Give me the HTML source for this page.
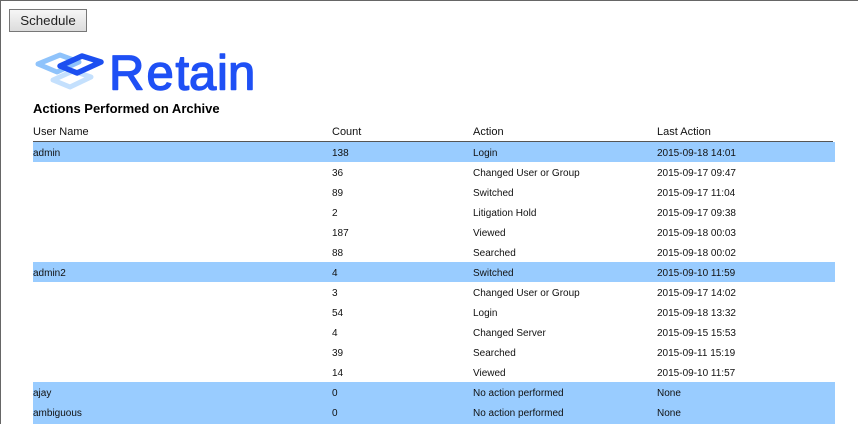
<!DOCTYPE html>
<html>
<head>
<meta charset="utf-8">
<style>
html,body{margin:0;padding:0;background:#fff;}
body{width:858px;height:424px;overflow:hidden;position:relative;font-family:"Liberation Sans",Arial,sans-serif;color:#111;}
#t{position:absolute;left:0;top:0;width:858px;height:1px;background:#666;}
#l{position:absolute;left:0;top:0;width:1px;height:424px;background:#666;}
#btn{position:absolute;left:9px;top:9px;width:76px;height:21px;border:1px solid #777;background:linear-gradient(#f6f6f6,#dcdcdc);font-size:13.33px;line-height:21px;text-align:center;color:#222;}
#logo{position:absolute;left:30px;top:45px;}
#title{position:absolute;left:33px;top:100px;font-size:13px;font-weight:bold;line-height:17px;color:#000;white-space:nowrap;}
.h{position:absolute;top:125px;font-size:11px;line-height:15px;white-space:nowrap;}
#rule{position:absolute;left:33px;top:141px;width:800px;height:1px;background:#555;}
.r{position:absolute;left:33px;width:802px;height:20px;font-size:10px;line-height:21px;white-space:nowrap;}
.r.b{background:#99ccff;}
.r span{position:absolute;top:1px;}
.c1{left:0;}.c2{left:299px;}.c3{left:440px;}.c4{left:624px;}
</style>
</head>
<body>
<div id="t"></div><div id="l"></div>
<div id="btn">Schedule</div>
<svg id="logo" width="230" height="50" viewBox="30 45 230 50" xmlns="http://www.w3.org/2000/svg">
<path d="M53 80 L73 71 L91 77 L70 87 Z" fill="none" stroke="#c4e0fd" stroke-width="5" stroke-linejoin="round"/>
<path d="M38 64 L60 55 L79 62 L57 72 Z" fill="none" stroke="#8fc3fb" stroke-width="5" stroke-linejoin="round"/>
<path d="M60 66 L82 56 L101 62 L77 73 Z" fill="none" stroke="#1c4ff0" stroke-width="5.5" stroke-linejoin="round"/>
<text x="109 146.5 175.5 189 217 228" y="89.5" font-family="'Liberation Sans',Arial,sans-serif" font-size="49" fill="#1f50f5" stroke="#1f50f5" stroke-width="1.4" stroke-linejoin="round">Retain</text>
</svg>
<div id="title">Actions Performed on Archive</div>
<div class="h" style="left:33px">User Name</div>
<div class="h" style="left:332px">Count</div>
<div class="h" style="left:473px">Action</div>
<div class="h" style="left:657px">Last Action</div>
<div id="rule"></div>
<div class="r b" style="top:142px"><span class="c1">admin</span><span class="c2">138</span><span class="c3">Login</span><span class="c4">2015-09-18 14:01</span></div>
<div class="r" style="top:162px"><span class="c2">36</span><span class="c3">Changed User or Group</span><span class="c4">2015-09-17 09:47</span></div>
<div class="r" style="top:182px"><span class="c2">89</span><span class="c3">Switched</span><span class="c4">2015-09-17 11:04</span></div>
<div class="r" style="top:202px"><span class="c2">2</span><span class="c3">Litigation Hold</span><span class="c4">2015-09-17 09:38</span></div>
<div class="r" style="top:222px"><span class="c2">187</span><span class="c3">Viewed</span><span class="c4">2015-09-18 00:03</span></div>
<div class="r" style="top:242px"><span class="c2">88</span><span class="c3">Searched</span><span class="c4">2015-09-18 00:02</span></div>
<div class="r b" style="top:262px"><span class="c1">admin2</span><span class="c2">4</span><span class="c3">Switched</span><span class="c4">2015-09-10 11:59</span></div>
<div class="r" style="top:282px"><span class="c2">3</span><span class="c3">Changed User or Group</span><span class="c4">2015-09-17 14:02</span></div>
<div class="r" style="top:302px"><span class="c2">54</span><span class="c3">Login</span><span class="c4">2015-09-18 13:32</span></div>
<div class="r" style="top:322px"><span class="c2">4</span><span class="c3">Changed Server</span><span class="c4">2015-09-15 15:53</span></div>
<div class="r" style="top:342px"><span class="c2">39</span><span class="c3">Searched</span><span class="c4">2015-09-11 15:19</span></div>
<div class="r" style="top:362px"><span class="c2">14</span><span class="c3">Viewed</span><span class="c4">2015-09-10 11:57</span></div>
<div class="r b" style="top:382px"><span class="c1">ajay</span><span class="c2">0</span><span class="c3">No action performed</span><span class="c4">None</span></div>
<div class="r b" style="top:402px;height:22px"><span class="c1">ambiguous</span><span class="c2">0</span><span class="c3">No action performed</span><span class="c4">None</span></div>
</body>
</html>
